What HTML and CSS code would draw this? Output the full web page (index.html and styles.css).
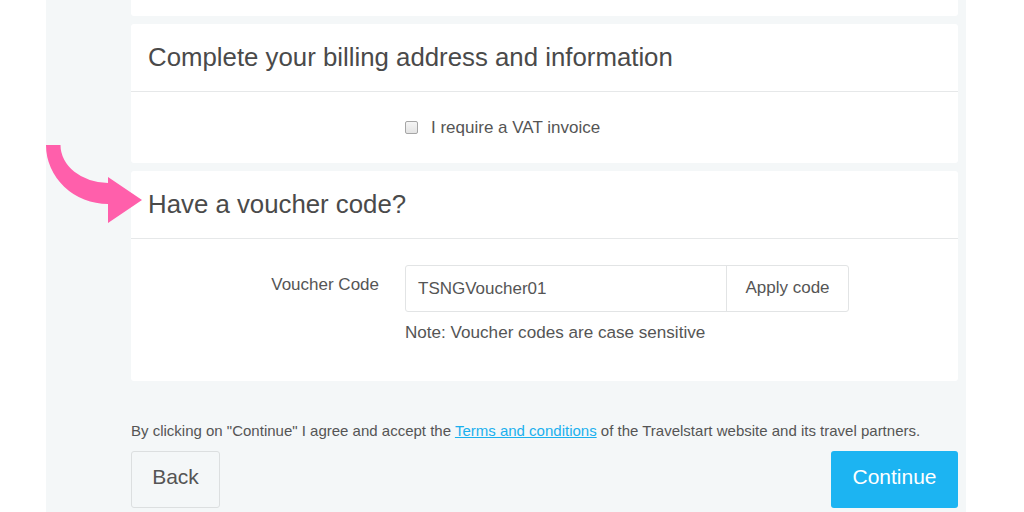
FILE: index.html
```html
<!DOCTYPE html>
<html>
<head>
<meta charset="utf-8">
<link rel="stylesheet" href="styles.css">
</head>
<body>
<div class="page">
  <div class="card card-top"></div>

  <section class="card">
    <h2 class="card-title">Complete your billing address and information</h2>
    <div class="card-body vat">
      <label class="check"><span class="box"></span>I require a VAT invoice</label>
    </div>
  </section>

  <section class="card">
    <h2 class="card-title">Have a voucher code?</h2>
    <div class="card-body voucher">
      <div class="label">Voucher Code</div>
      <div class="field">
        <div class="input-group">
          <div class="input">TSNGVoucher01</div>
          <div class="apply">Apply code</div>
        </div>
        <div class="note">Note: Voucher codes are case sensitive</div>
      </div>
    </div>
  </section>

  <p class="terms">By clicking on "Continue" I agree and accept the <a href="#">Terms and conditions</a> of the Travelstart website and its travel partners.</p>
  <div class="actions">
    <button class="btn back">Back</button>
    <button class="btn continue">Continue</button>
  </div>

  <svg class="arrow" width="110" height="90" viewBox="40 140 110 90">
    <path d="M46,145 A62,59 0 0 0 108,204 L108,223 L142,200 L108,177 L108,183 A48,38 0 0 1 60.5,145 Z" fill="#ff5fab"/>
  </svg>
</div>
</body>
</html>
```

FILE: styles.css
```css
* { box-sizing: border-box; }
html, body { margin: 0; padding: 0; background: #ffffff; }
body {
  font-family: "Liberation Sans", Arial, sans-serif;
  color: #555555;
  width: 1024px;
  height: 512px;
  overflow: hidden;
}
.page {
  position: relative;
  margin-left: 46px;
  width: 920px;
  height: 512px;
  background: #f4f7f8;
  padding: 0 8px 0 85px;
}
.card {
  background: #ffffff;
  border-radius: 3px;
  margin-bottom: 8px;
}
.card-top {
  height: 16px;
  border-radius: 0 0 3px 3px;
}
.card-title {
  margin: 0;
  font-weight: normal;
  font-size: 25.8px;
  color: #4a4a4a;
  height: 68px;
  line-height: 67px;
  padding-left: 17px;
  border-bottom: 1px solid #e6e8e9;
}
.card-body.vat {
  height: 71px;
  display: flex;
  align-items: center;
  padding-left: 274px;
}
.check {
  display: flex;
  align-items: center;
  font-size: 17px;
  color: #555;
}
.box {
  width: 13px;
  height: 13px;
  border: 1px solid #a6a6a6;
  border-radius: 2px;
  background: linear-gradient(#f5f5f5, #e4e4e4);
  margin-right: 13px;
}
.voucher {
  display: flex;
  padding: 26px 0 0 0;
  height: 142px;
}
.label {
  width: 248px;
  text-align: right;
  font-size: 17px;
  color: #555;
  padding-top: 10px;
}
.field { margin-left: 26px; }
.input-group {
  display: flex;
  height: 47px;
  width: 444px;
  border: 1px solid #e2e4e5;
  border-radius: 3px;
}
.input {
  width: 321px;
  border-right: 1px solid #e2e4e5;
  font-size: 17px;
  color: #555;
  line-height: 45px;
  padding-left: 12px;
}
.apply {
  flex: 1;
  text-align: center;
  font-size: 17px;
  color: #555;
  line-height: 43px;
}
.note {
  margin-top: 11px;
  font-size: 17.1px;
  color: #555;
}
.terms {
  margin: 40px 0 0 0;
  font-size: 15px;
  color: #555;
  line-height: 20px;
}
.terms a { color: #1ab0ee; text-decoration: underline; }
.actions {
  display: flex;
  justify-content: space-between;
  margin-top: 10px;
}
.btn {
  font-family: "Liberation Sans", Arial, sans-serif;
  font-size: 21px;
  height: 57px;
  padding: 0 0 5px 0;
  border-radius: 3px;
  cursor: pointer;
}
.back {
  width: 89px;
  background: #f4f7f8;
  border: 1px solid #dcdfe0;
  color: #555;
}
.continue {
  width: 127px;
  background: #1cb4f2;
  border: none;
  color: #ffffff;
}
.arrow {
  position: absolute;
  left: -6px;
  top: 140px;
}
```
